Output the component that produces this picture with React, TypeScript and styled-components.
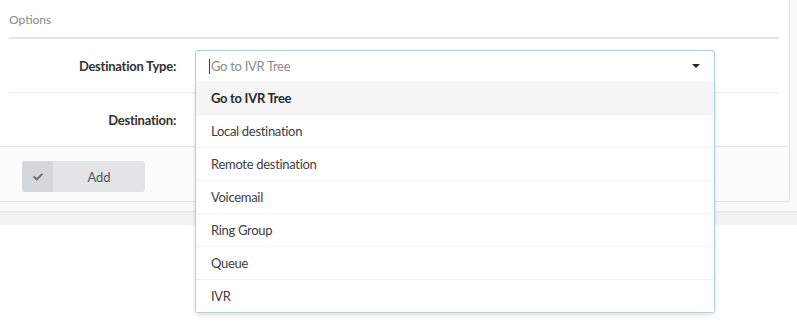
import React from 'react';
import styled, { createGlobalStyle } from 'styled-components';
import { FaCheck } from 'react-icons/fa';

const GlobalStyle = createGlobalStyle`
  html, body {
    margin: 0;
    padding: 0;
    background: #ffffff;
    font-family: Lato, "Open Sans", sans-serif;
  }
`;

const Page = styled.div`
  width: 797px;
  height: 331px;
  overflow: hidden;
  background: #ffffff;
`;

const Backdrop = styled.div`
  background: #fafafa;
  padding: 0 7px 9px 0;
`;

const Panel = styled.div`
  background: #ffffff;
  border: 1px solid #e2e2e2;
  border-top: none;
  border-left: none;
  border-radius: 0 0 4px 0;
`;

const Body = styled.div`
  padding: 0 10px 0 9px;
`;

const Legend = styled.div`
  height: 37px;
  line-height: 40px;
  font-size: 12px;
  color: #888;
  border-bottom: 2px solid #e4e4e4;
`;

const Row = styled.div<{ $last?: boolean }>`
  display: flex;
  align-items: center;
  height: 53px;
  border-bottom: ${(p) => (p.$last ? 'none' : '1px solid #ececec')};
`;

const Label = styled.div`
  width: 167px;
  text-align: right;
  font-size: 13px;
  letter-spacing: -0.25px;
  font-weight: 700;
  color: #333;
  margin-right: 19px;
`;

const Select = styled.div`
  position: relative;
  width: 520px;
  height: 31px;
  box-sizing: border-box;
  display: flex;
  align-items: center;
  padding: 0 14px 0 13px;
  border: 1px solid #a9d1e3;
  border-bottom: none;
  border-radius: 4px 4px 0 0;
  background: #fff;
`;

const Placeholder = styled.span`
  flex: 1;
  font-size: 13px;
  letter-spacing: -0.3px;
  color: #8c8c8c;
  display: flex;
  align-items: center;
`;

const TextCursor = styled.span`
  display: inline-block;
  width: 1px;
  height: 15px;
  background: #444;
  margin-right: 1px;
`;

const CaretDown = styled.span`
  width: 0;
  height: 0;
  border-left: 4px solid transparent;
  border-right: 4px solid transparent;
  border-top: 4px solid #222;
`;

const Menu = styled.ul`
  position: absolute;
  top: 100%;
  left: -1px;
  right: -1px;
  margin: 0;
  padding: 0;
  list-style: none;
  background: #fff;
  border: 1px solid #a9d1e3;
  border-top: none;
  border-radius: 0 0 4px 4px;
  box-shadow: 0 2px 4px rgba(0, 0, 0, 0.12);
  z-index: 10;
`;

const Item = styled.li<{ $active?: boolean }>`
  height: 33px;
  box-sizing: border-box;
  display: flex;
  align-items: center;
  padding-left: 15px;
  font-size: 13px;
  letter-spacing: -0.3px;
  color: ${(p) => (p.$active ? '#2b2b2b' : '#404040')};
  font-weight: ${(p) => (p.$active ? 700 : 400)};
  background: ${(p) => (p.$active ? '#f5f5f5' : '#fff')};
  border-top: ${(p) => (p.$active ? 'none' : '1px solid #f3f3f3')};
`;

const Footer = styled.div`
  border-top: 1px solid #e6e6e6;
  background: #fcfcfc;
  padding: 14px 0 9px 22px;
  border-radius: 0 0 4px 0;
`;

const Button = styled.div`
  display: flex;
  width: 123px;
  height: 31px;
  border-radius: 3px;
  overflow: hidden;
  background: #e3e4e6;
`;

const ButtonIcon = styled.span`
  width: 31px;
  display: flex;
  align-items: center;
  justify-content: center;
  background: #d6d7d9;
  color: #707070;
  font-size: 10px;
`;

const ButtonText = styled.span`
  flex: 1;
  display: flex;
  align-items: center;
  justify-content: center;
  font-size: 13px;
  color: #555;
`;

const Band = styled.div`
  height: 13px;
  border-top: 1px solid #e4e4e4;
  background: #f2f2f2;
`;

const options = [
  'Go to IVR Tree',
  'Local destination',
  'Remote destination',
  'Voicemail',
  'Ring Group',
  'Queue',
  'IVR',
];

export default function App() {
  return (
    <Page>
      <GlobalStyle />
      <Backdrop>
        <Panel>
          <Body>
            <Legend>Options</Legend>
            <Row>
              <Label>Destination Type:</Label>
              <Select>
                <Placeholder>
                  <TextCursor />
                  Go to IVR Tree
                </Placeholder>
                <CaretDown />
                <Menu>
                  {options.map((o, i) => (
                    <Item key={o} $active={i === 0}>
                      {o}
                    </Item>
                  ))}
                </Menu>
              </Select>
            </Row>
            <Row $last>
              <Label>Destination:</Label>
            </Row>
          </Body>
          <Footer>
            <Button>
              <ButtonIcon>
                <FaCheck />
              </ButtonIcon>
              <ButtonText>Add</ButtonText>
            </Button>
          </Footer>
        </Panel>
      </Backdrop>
      <Band />
    </Page>
  );
}
